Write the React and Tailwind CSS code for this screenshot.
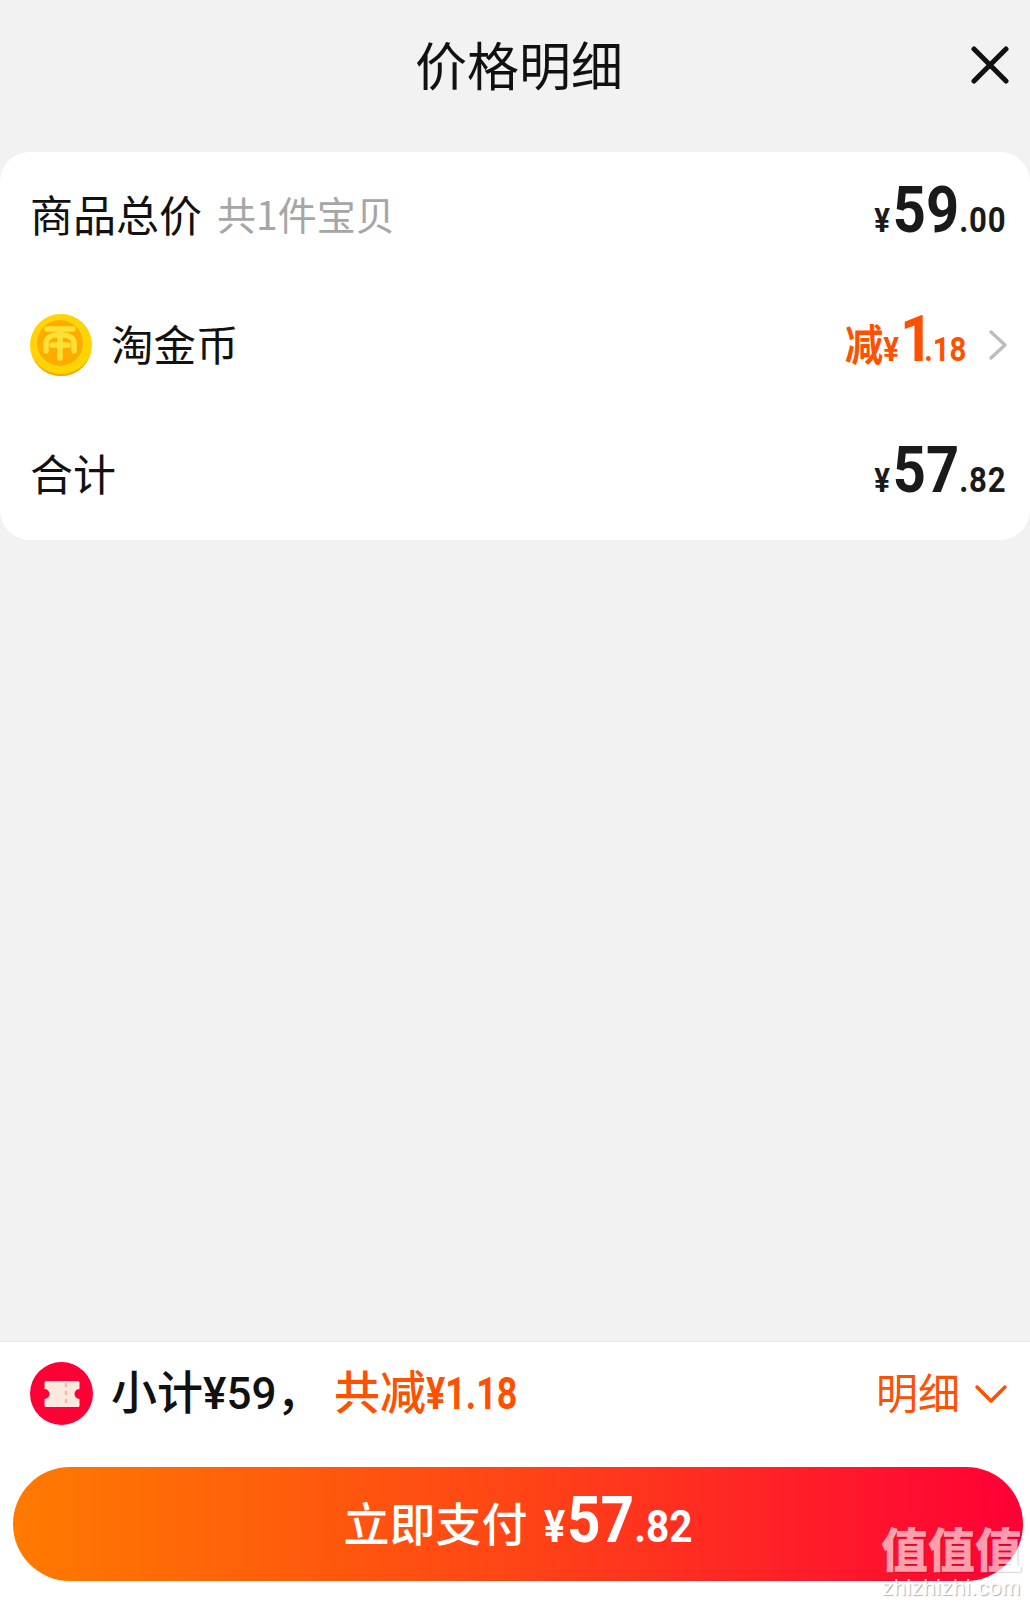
import React from 'react';

const cjk = "font-['Noto_Sans_CJK_SC',sans-serif]";
const num = "font-['Roboto',sans-serif] font-bold";

// digits in the shot are a condensed DIN, so squeeze Roboto sideways
function Price({ big, small, color = 'text-[#1a1a1a]' }) {
  return (
    <div className={`flex items-baseline origin-right scale-x-[0.89] ${num} ${color}`}>
      <span className="text-[33px] leading-none mr-[3px]">¥</span>
      <span className="text-[65px] leading-none">{big}</span>
      <span className="text-[35px] leading-none tracking-[1px]">{small}</span>
    </div>
  );
}

function Coin() {
  return (
    <svg width="64" height="64" viewBox="0 0 64 64">
      <circle cx="32" cy="32" r="31" fill="#ffd400" />
      <path d="M1 32a31 31 0 0 0 62 0 31 29 0 0 1-62 0z" fill="#f5a800" />
      <circle cx="31" cy="30" r="24" fill="#ffac00" />
      <circle cx="31" cy="30" r="24" fill="none" stroke="#ffd60a" strokeWidth="2" />
      <path d="M18 16h26M17 38v-8a10 8 0 0 1 10-8h8a10 8 0 0 1 10 8v8M31 16v29M23 32h16" fill="none" stroke="#ffe135" strokeWidth="5.5" strokeLinecap="round" />
    </svg>
  );
}

function Ticket() {
  return (
    <div className="w-[63px] h-[63px] rounded-full bg-[#ff0036] flex items-center justify-center shrink-0">
      <svg width="36" height="28" viewBox="0 0 36 28">
        <path d="M2 1h32a1.500 1.500 0 0 1 1.500 1.500V9a5 5 0 0 0 0 10v6.500A1.500 1.500 0 0 1 34 27H2A1.500 1.500 0 0 1 .5 25.500V19a5 5 0 0 0 0-10V2.500A1.500 1.500 0 0 1 2 1z" fill="#fbe9df" />
        <path d="M22 3v22" stroke="#f5b9a5" strokeWidth="2.500" strokeDasharray="4 4" />
      </svg>
    </div>
  );
}

export default function App() {
  return (
    <div className={`w-[1030px] h-[1604px] bg-[#f2f2f2] flex flex-col relative overflow-hidden ${cjk}`}>
      {/* Header */}
      <div className="h-[152px] pb-[24px] pl-[8px] flex items-center justify-center relative shrink-0">
        <h1 className="text-[52px] font-normal text-[#111] leading-none">价格明细</h1>
        <svg className="absolute right-[21px] top-[46px]" width="38" height="38" viewBox="0 0 38 38">
          <path d="M3 3l32 32M35 3L3 35" stroke="#111" strokeWidth="5" strokeLinecap="round" />
        </svg>
      </div>

      {/* Price card */}
      <div className="bg-white rounded-[30px] h-[388px] shrink-0 flex flex-col">
        <div className="h-[130px] flex items-center justify-between pl-[30px] pr-[23px]">
          <div className="flex items-center mb-[8px]">
            <span className="text-[43px] text-[#111] leading-none">商品总价</span>
            <span className="text-[39px] text-[#a6a6a6] leading-none ml-[15px]">共1件宝贝</span>
          </div>
          <div className="mb-[14px]">
            <Price big="59" small=".00" />
          </div>
        </div>
        <div className="h-[130px] flex items-center justify-between pl-[29px] pr-[22px]">
          <div className="flex items-center">
            <div className="mb-[4px]">
              <Coin />
            </div>
            <span className="text-[42.5px] text-[#111] leading-none ml-[18px] mb-[8px]">淘金币</span>
          </div>
          <div className="flex items-center">
            <div className="flex items-baseline text-[#ff5000] mb-[16px] origin-right scale-x-[0.89]">
              <span className="text-[43px] leading-none font-bold">减</span>
              <span className={`${num} text-[33px] leading-none mr-[1px]`}>¥</span>
              <span className={`${num} text-[65px] leading-none`}>1</span>
              <span className={`${num} text-[33px] leading-none -ml-[10px]`}>.18</span>
            </div>
            <svg className="ml-[22px] mb-[4px]" width="20" height="32" viewBox="0 0 20 32">
              <path d="M3 3l14 13L3 29" fill="none" stroke="#bdbdbd" strokeWidth="3.500" strokeLinecap="round" strokeLinejoin="round" />
            </svg>
          </div>
        </div>
        <div className="h-[128px] flex items-center justify-between pl-[30px] pr-[23px]">
          <span className="text-[43px] text-[#111] leading-none mb-[8px]">合计</span>
          <div className="mb-[11px]">
            <Price big="57" small=".82" />
          </div>
        </div>
      </div>

      <div className="flex-1" />

      {/* Bottom bar */}
      <div className="h-[263px] bg-white border-t border-[#e8e8e8] shrink-0 flex flex-col">
        <div className="h-[103px] flex items-center justify-between pl-[30px] pr-[22px] shrink-0">
          <div className="flex items-center">
            <Ticket />
            <span className="text-[46px] font-medium text-[#111] leading-none ml-[18px] mb-[6px] w-[223px]">
              小计<span className={`${num} font-medium text-[44px]`}>¥59</span>，
            </span>
            <span className="text-[46px] font-medium text-[#ff5000] leading-none mb-[6px]">
              共减<span className={`${num} inline-block origin-left scale-x-[0.815] text-[44px]`}>¥1.18</span>
            </span>
          </div>
          <div className="flex items-center">
            <span className="text-[42px] text-[#ff5000] leading-none mb-[6px]">明细</span>
            <svg className="ml-[14px]" width="34" height="20" viewBox="0 0 34 20">
              <path d="M3 3l14 14L31 3" fill="none" stroke="#ff5000" strokeWidth="3.500" strokeLinecap="round" strokeLinejoin="round" />
            </svg>
          </div>
        </div>
        <div className="pr-[7px] pl-[13px] mt-[22px]">
          <div className="h-[114px] rounded-full bg-linear-to-r/srgb from-[#ff7a00] via-[#ff4416] to-[#ff0036] flex items-center justify-center text-white">
            <span className="text-[46px] font-medium leading-none mr-[16px] mb-[6px]">立即支付</span>
            <div className={`flex items-baseline origin-left scale-x-[0.9] -mr-[16px] mb-[7px] ${num}`}>
              <span className="text-[44px] leading-none mr-[2px]">¥</span>
              <span className="text-[65px] leading-none">57</span>
              <span className="text-[45px] leading-none">.82</span>
            </div>
          </div>
        </div>
      </div>

      {/* Watermark */}
      <div className="absolute right-[8px] bottom-[5px] flex flex-col items-center text-white">
        <div className="text-[47px] font-black leading-none opacity-60 [text-shadow:1px_1px_1px_rgba(0,0,0,0.3)]">值值值</div>
        <div className="font-['Liberation_Sans',sans-serif] text-[22px] leading-none mt-[7px] tracking-[0.5px] opacity-80 [text-shadow:1px_1px_1px_rgba(0,0,0,0.4)]">zhizhizhi.com</div>
      </div>
    </div>
  );
}
